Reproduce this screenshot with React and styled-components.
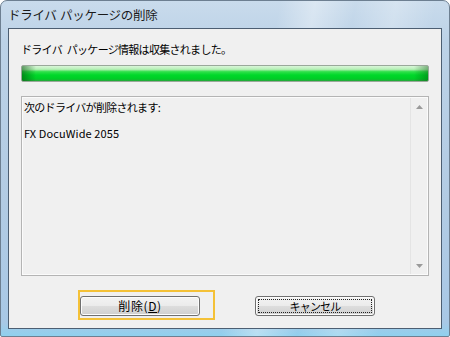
import React from "react";
import styled, { createGlobalStyle } from "styled-components";

const GlobalStyle = createGlobalStyle`
  html, body {
    margin: 0;
    padding: 0;
    background: #ffffff;
    overflow: hidden;
  }
  body {
    font-family: "Noto Sans CJK JP", "Noto Sans", sans-serif;
  }
`;

const Window = styled.div`
  width: 450px;
  height: 337px;
  box-sizing: border-box;
  display: flex;
  flex-direction: column;
  padding: 0 7px 7px 7px;
  border: 1px solid #6d7f91;
  border-radius: 7px 7px 2px 2px;
  background:
    linear-gradient(100deg, transparent 55%, rgba(255, 255, 255, 0.35) 62%, transparent 70%, rgba(255, 255, 255, 0.25) 78%, transparent 86%),
    linear-gradient(180deg, #c9dbec 0%, #bcd2e7 12%, #b2cbe3 60%, #a8c8e6 96%, #8fd0ee 100%);
`;

const TitleBar = styled.div`
  height: 27px;
  display: flex;
  align-items: center;
  font-size: 12.5px;
  color: #1a1a1a;
  letter-spacing: -0.3px;
  word-spacing: 1px;
`;

const Client = styled.div`
  flex: 1;
  display: flex;
  flex-direction: column;
  background: #f0f0f0;
  border: 1px solid #4c5e72;
  padding: 12px 12px 0 12px;
`;

const Label = styled.div`
  height: 16px;
  line-height: 16px;
  font-size: 11px;
  color: #000;
  letter-spacing: -0.7px;
  word-spacing: 3px;
`;

const Progress = styled.div`
  margin-top: 8px;
  height: 15px;
  border: 1px solid #9aa89a;
  border-radius: 2px;
  background:
    linear-gradient(90deg, rgba(0, 80, 10, 0.55) 0px, rgba(0, 80, 10, 0) 14px, rgba(0, 80, 10, 0) calc(100% - 14px), rgba(0, 80, 10, 0.4) 100%),
    linear-gradient(180deg, #d9f7d9 0%, #b6efb6 22%, #31e04b 38%, #00d82a 60%, #00cd26 85%, #26a63b 100%);
`;

const ListBox = styled.div`
  margin-top: 14px;
  height: 178px;
  display: flex;
  border: 1px solid #b4b4b4;
  box-shadow: inset 0 0 0 1px #fbfbfb;
  background: #f0f0f0;
`;

const ListText = styled.div`
  flex: 1;
  padding: 2px 0 0 2px;
  font-size: 11px;
  color: #000;
`;

const ListLine = styled.div`
  height: 16px;
  line-height: 16px;
  margin-bottom: ${({ $gap }) => $gap || 0}px;
  letter-spacing: ${({ $latin }) => ($latin ? "0.1px" : "-0.7px")};
`;

const ScrollBar = styled.div`
  width: 16px;
  display: flex;
  flex-direction: column;
  justify-content: space-between;
  align-items: center;
  padding: 7px 0 6px 0;
  border-left: 1px solid #e4e4e4;
  margin: 1px 1px 1px 0;
`;

const Arrow = styled.svg`
  width: 7px;
  height: 4px;
`;

const ButtonRow = styled.div`
  margin-top: 16px;
  display: flex;
  gap: 55px;
  padding-left: 59px;
`;

const ButtonSlot = styled.div`
  position: relative;
`;

const Highlight = styled.div`
  position: absolute;
  left: -2px;
  top: -2px;
  width: 133px;
  height: 26px;
  border: 2px solid #f4c137;
  pointer-events: none;
`;

const Button = styled.button`
  width: 120px;
  height: 20px;
  box-sizing: border-box;
  padding: 0;
  position: relative;
  border: 1px solid #707070;
  border-radius: 3px;
  font-family: "Noto Sans CJK JP", "Noto Sans", sans-serif;
  font-size: ${({ $wide }) => ($wide ? "12px" : "11px")};
  letter-spacing: ${({ $wide }) => ($wide ? "0.6px" : "-0.8px")};
  color: #000;
  background: linear-gradient(180deg, #f3f3f3 0%, #ebebeb 48%, #dddddd 52%, #cfcfcf 100%);
  box-shadow: inset 0 0 0 1px #fcfcfc;
  outline: ${({ $focused }) => ($focused ? "1px dotted #202020" : "none")};
  outline-offset: -4px;
`;

const Mnemonic = styled.span`
  text-decoration: underline;
  text-underline-offset: 1px;
`;

export default function App() {
  return (
    <>
      <GlobalStyle />
      <Window>
        <TitleBar>ドライバ パッケージの削除</TitleBar>
        <Client>
          <Label>ドライバ パッケージ情報は収集されました。</Label>
          <Progress />
          <ListBox>
            <ListText>
              <ListLine $gap={10}>次のドライバが削除されます:</ListLine>
              <ListLine $latin>FX DocuWide 2055</ListLine>
            </ListText>
            <ScrollBar>
              <Arrow viewBox="0 0 7 4">
                <path d="M3.5 0 L7 4 L0 4 Z" fill="#9a9a9a" />
              </Arrow>
              <Arrow viewBox="0 0 7 4">
                <path d="M0 0 L7 0 L3.5 4 Z" fill="#9a9a9a" />
              </Arrow>
            </ScrollBar>
          </ListBox>
          <ButtonRow>
            <ButtonSlot>
              <Button $wide>
                削除(<Mnemonic>D</Mnemonic>)
              </Button>
              <Highlight />
            </ButtonSlot>
            <ButtonSlot>
              <Button $focused>キャンセル</Button>
            </ButtonSlot>
          </ButtonRow>
        </Client>
      </Window>
    </>
  );
}
